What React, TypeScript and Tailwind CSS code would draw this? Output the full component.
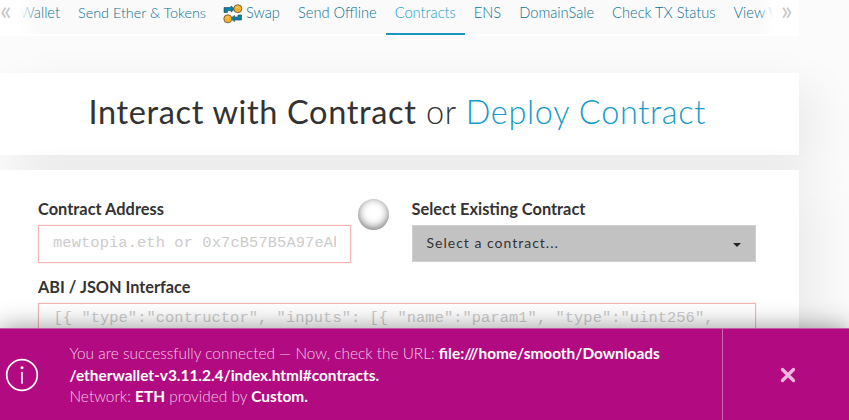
import React from 'react';

const tabs = ['Send Offline', 'Contracts', 'ENS', 'DomainSale', 'Check TX Status', 'View W'];

function SwapIcon() {
  return (
    <svg width="20" height="20" viewBox="0 0 20 20" className="mr-[3px] shrink-0">
      <path d="M1 8.500V3.500H8V2L12 5L8 8V6.500H4.500V8.500Z" fill="#0b7fa8" stroke="#24485a" strokeWidth=".6" />
      <path d="M18.500 11V16H11.500V17.500L7.500 14.500L11.500 11.500V13H15V11Z" fill="#0b7fa8" stroke="#24485a" strokeWidth=".6" />
      <circle cx="14.800" cy="4.700" r="4" fill="#fbb02a" stroke="#6f5a3a" strokeWidth=".9" />
      <circle cx="4.800" cy="14.800" r="4" fill="#fbb02a" stroke="#6f5a3a" strokeWidth=".9" />
      <path d="M13.200 3.300h2M3.600 13.100h2" stroke="#ffd97f" />
    </svg>
  );
}

function Nav() {
  return (
    <nav className="relative h-9 w-[799px] bg-white text-[14.65px] font-light text-[#0b7290]">
      <div className="flex h-[34px] items-start whitespace-nowrap bg-[#fafafa] pl-[9px] leading-[26px]">
        <span className="w-[60px] px-[9px]"><span className="flex w-[42px] justify-end">Wallet</span></span>
        <span className="w-[145px] px-[9px] text-[14.4px]">Send Ether &amp; Tokens</span>
        <span className="flex w-[75px] px-[9px]"><span className="mt-[4px]"><SwapIcon /></span>Swap</span>
        {tabs.map((tab) => (
          <span key={tab} className={tab === 'Contracts' ? 'h-[35px] border-b-2 border-[#1b95bd] px-[9px] text-[#16a0cb]' : 'px-[9px]'}>{tab}</span>
        ))}
      </div>
      <span className="absolute left-0 top-0 h-9 w-10 bg-gradient-to-r from-white from-50% to-transparent pt-px text-[27px] font-normal leading-[18px] text-[#c8c8c8]">«</span>
      <span className="absolute right-0 top-0 h-9 w-10 bg-gradient-to-l from-white from-65% to-transparent pl-[22px] pt-px text-[27px] font-normal leading-[18px] text-[#c8c8c8]">»</span>
    </nav>
  );
}

function Notice() {
  return (
    <footer className="absolute inset-x-0 bottom-0 flex h-[92px] border-t border-[#c65aa6] bg-[#b20b82] text-white shadow-[0_0_24px_rgba(0,0,0,0.42)]">
      <div className="flex w-[69.5px] items-center pl-[5px]">
        <svg width="34" height="34" viewBox="0 0 34 34" fill="none" stroke="white" strokeWidth="1.700">
          <circle cx="17" cy="17" r="15.300" />
          <path d="M17 14.500V25" strokeLinecap="round" />
          <circle cx="17" cy="9.700" r="1.500" fill="white" stroke="none" />
        </svg>
      </div>
      <p className="w-[652.5px] whitespace-nowrap pt-[14px] text-[15.4px] font-light leading-[21.500px] text-[#f0c8e4]">
        You are successfully connected — Now, check the URL: <b className="font-bold text-white">file:///home/smooth/Downloads</b><br />
        <b className="font-bold text-white">/etherwallet-v3.11.2.4/index.html#contracts.</b><br />
        Network: <b className="font-bold text-white">ETH</b> provided by <b className="font-bold text-white">Custom.</b>
      </p>
      <div className="flex flex-1 items-center border-l border-[#cc66af] pl-[57px]">
        <svg width="16" height="16" viewBox="0 0 16 16" stroke="#edb6dc" strokeWidth="3.300" strokeLinecap="round">
          <path d="M2.500 2.500L13.500 13.500M13.500 2.500L2.500 13.500" />
        </svg>
      </div>
    </footer>
  );
}

export default function App() {
  return (
    <main className="relative h-[420px] w-[849px] overflow-hidden bg-[#fbfbfb] font-['Lato',sans-serif] text-[#333]">
      <Nav />
      <section className="mt-[37px] h-[82px] w-[799px] bg-white shadow-[16px_16px_47px_0_rgba(0,0,0,0.07)]">
        <h1 className="whitespace-nowrap pl-[88.5px] pt-[17px] text-[32.5px] font-light leading-[44px] tracking-[0.65px]">
          <span className="font-normal">Interact with Contract</span> or <span className="text-[#169bc6]">Deploy Contract</span>
        </h1>
      </section>
      <section className="mt-[15px] h-[400px] w-[799px] bg-white px-[38px] pt-[28px] shadow-[16px_16px_47px_0_rgba(0,0,0,0.07)]">
        <div className="flex">
          <div className="w-[313px]">
            <label className="block h-[27px] text-[16.4px] font-bold leading-[22px]">Contract Address</label>
            <div className="h-[38px] border-[1.5px] border-[#f5b5b5] px-[14px] shadow-[0_0_1px_#f5b5b5]">
              <div className="overflow-hidden whitespace-nowrap font-['Liberation_Mono',monospace] text-[15.4px] leading-[35px] tracking-[0.1px] text-[#ccc]">mewtopia.eth or 0x7cB57B5A97eAb</div>
            </div>
          </div>
          <div className="ml-[7px] mt-px size-[31px] rounded-full bg-white shadow-[inset_0_-2px_9px_rgba(0,0,0,0.550)]" />
          <div className="ml-[22.5px] w-[344px]">
            <label className="block h-[27px] text-[16.4px] font-bold leading-[22px]">Select Existing Contract</label>
            <div className="flex h-[37px] items-center justify-between border border-[#d0d0d0] bg-[#c2c2c2] px-[14px] text-[14px] tracking-[1px]">
              <span className="-mt-[2px]">Select a contract...</span>
              <span className="mt-[3px] border-x-4 border-t-4 border-x-transparent border-t-[#222]" />
            </div>
          </div>
        </div>
        <label className="mt-[13px] block h-[27px] text-[16.3px] font-bold leading-[22px]">ABI / JSON Interface</label>
        <div className="h-[130px] w-[718px] whitespace-nowrap border border-[#f5b5b5] px-[14.5px] font-['Liberation_Mono',monospace] text-[15.4px] leading-[28px] tracking-[0.06px] text-[#ccc] shadow-[0_0_1px_#f5b5b5]">
          {'[{ "type":"contructor", "inputs": [{ "name":"param1", "type":"uint256",'}
        </div>
      </section>
      <Notice />
    </main>
  );
}
